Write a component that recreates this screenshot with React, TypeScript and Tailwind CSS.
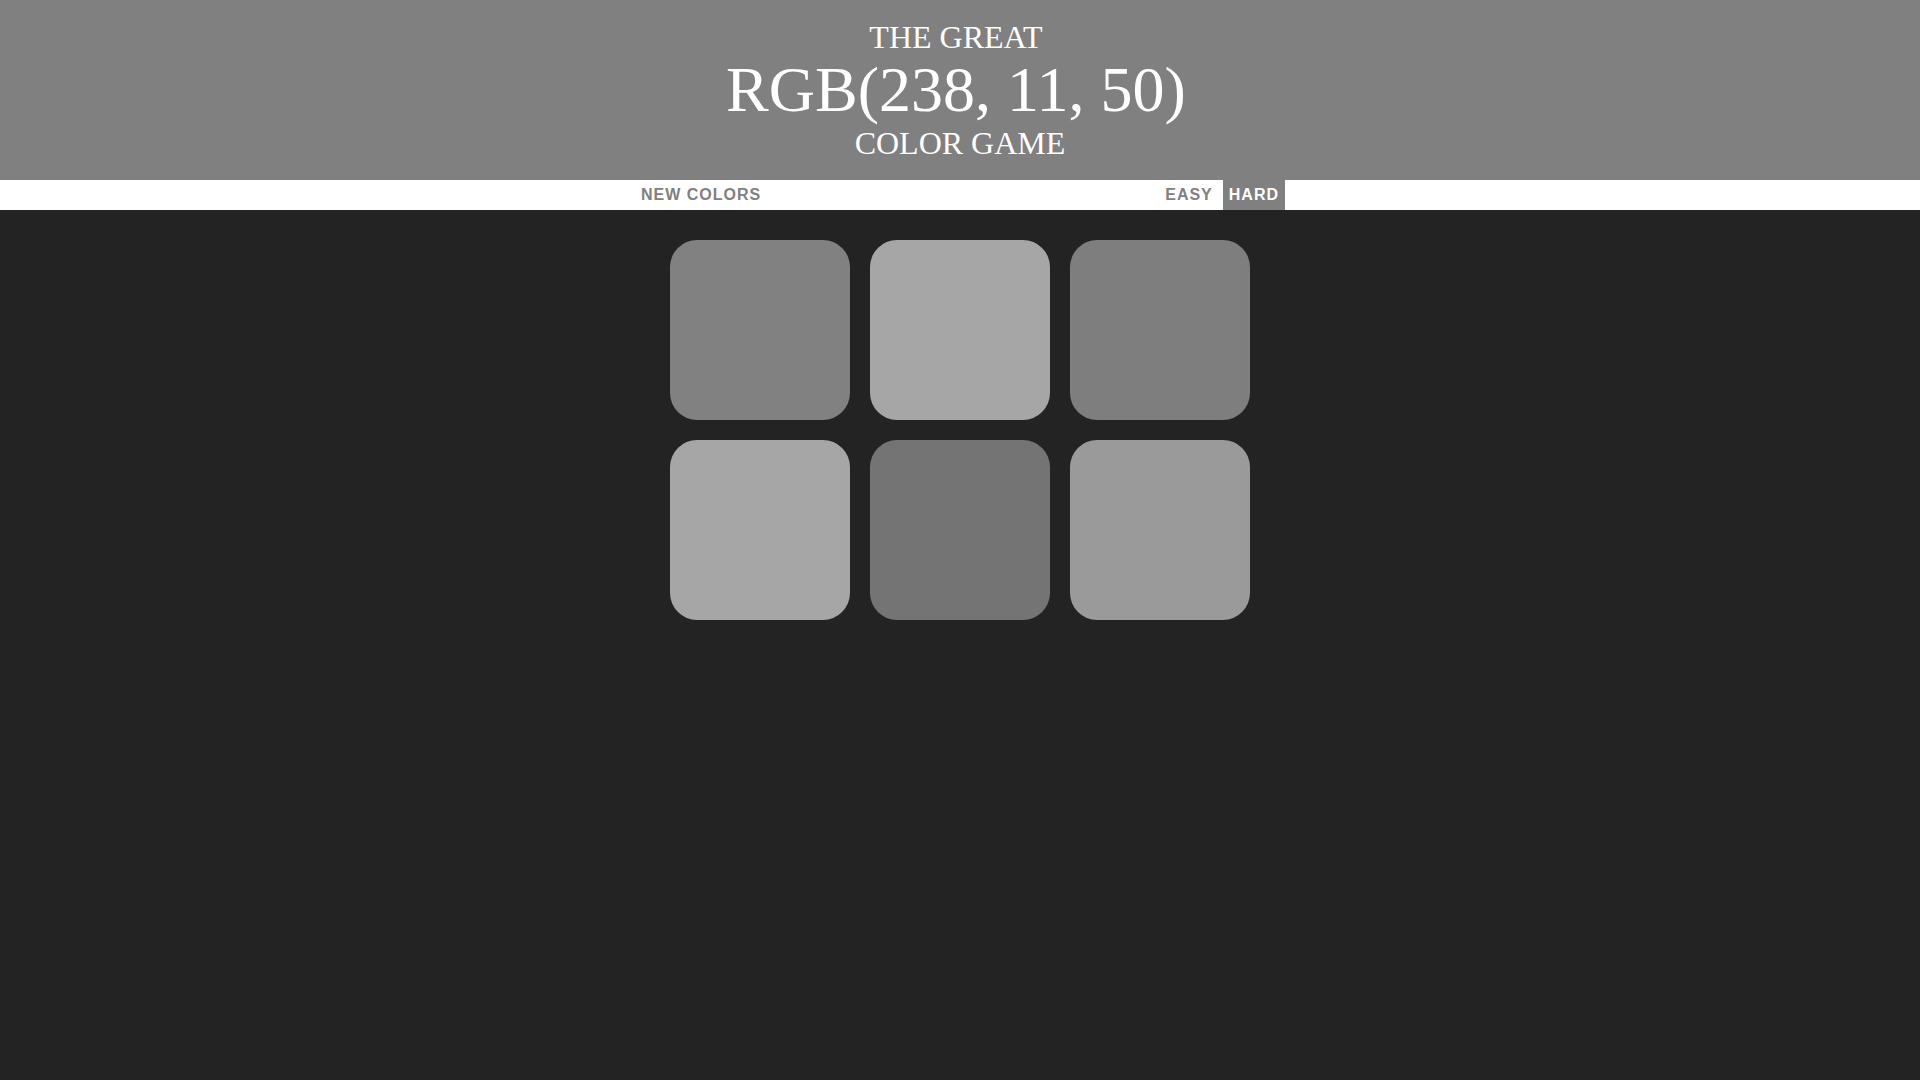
import React from "react";

const squares = ["#818181", "#a6a6a6", "#7e7e7e", "#a6a6a6", "#747474", "#9a9a9a"];

export default function App() {
  return (
    <div className="min-h-[1080px] bg-[#232323] m-0" style={{ fontFamily: '"Liberation Sans", Arial, sans-serif' }}>
      <h1
        className="m-0 h-[180px] bg-[#808080] pt-5 text-center text-[32px] font-normal uppercase leading-[1.1] text-white"
        style={{ fontFamily: '"Liberation Serif", "Times New Roman", serif' }}
      >
        {"The Great\u00a0"}
        <br />
        <span className="text-[64px]">RGB(238, 11, 50)</span>
        {"\u00a0"}
        <br />
        Color Game
      </h1>
      <div className="flex h-[30px] justify-center gap-[4px] bg-white text-[16px]">
        <button className="h-full bg-transparent px-[6px] font-bold uppercase tracking-[1px] text-[#808080]">
          New Colors
        </button>
        <span className="inline-block w-[20%]"></span>
        <button className="h-full bg-transparent px-[6px] font-bold uppercase tracking-[1px] text-[#808080]">
          Easy
        </button>
        <button className="h-full bg-[#808080] px-[6px] font-bold uppercase tracking-[1px] text-white">
          Hard
        </button>
      </div>
      <div className="mx-auto mt-5 grid w-[600px] grid-cols-3 gap-5 p-[10px]">
        {squares.map((c, i) => (
          <div key={i} className="h-[180px] w-[180px] rounded-[27px]" style={{ backgroundColor: c }} />
        ))}
      </div>
    </div>
  );
}
